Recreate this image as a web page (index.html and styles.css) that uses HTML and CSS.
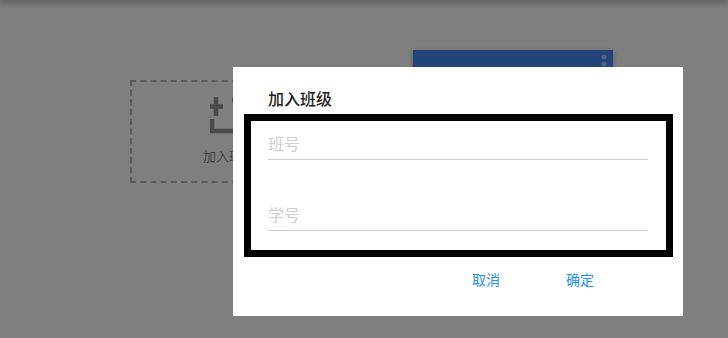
FILE: index.html
```html
<!DOCTYPE html>
<html lang="zh">
<head>
    <meta charset="UTF-8">
    <meta name="viewport" content="width=device-width, initial-scale=1.0">
    <title>加入班级</title>
    <link rel="stylesheet" href="styles.css">
</head>
<body>
    <div class="topbar"></div>

    <div class="main">
        <div class="join-card">
            <svg class="join-icon" width="40" height="38" viewBox="0 0 40 38">
                <path d="M6 1 V20 M-1 10.5 H13" stroke="#949494" stroke-width="4.5" fill="none"/>
                <path d="M2 23 V35 H38 V4 H22" stroke="#949494" stroke-width="4.5" fill="none"/>
            </svg>
            <div class="join-text">加入班级</div>
        </div>

        <div class="class-card">
            <svg class="more" width="6" height="20" viewBox="0 0 6 20">
                <circle cx="3" cy="3" r="2.5" fill="rgba(255,255,255,0.55)"/>
                <circle cx="3" cy="10" r="2.5" fill="rgba(255,255,255,0.55)"/>
                <circle cx="3" cy="17" r="2.5" fill="rgba(255,255,255,0.55)"/>
            </svg>
        </div>
    </div>

    <!-- dialog -->
    <div class="overlay"></div>
    <div class="dialog">
        <h2 class="dialog-title">加入班级</h2>
        <div class="form-box">
            <div class="field">
                <input type="text" placeholder="班号">
            </div>
            <div class="field second">
                <input type="text" placeholder="学号">
            </div>
        </div>
        <div class="actions">
            <button>取消</button>
            <button>确定</button>
        </div>
    </div>
</body>
</html>
```

FILE: styles.css
```css
body {
    margin: 0;
    background: #ffffff;
    font-family: 'Noto Sans CJK SC', 'Noto Sans', sans-serif;
    height: 338px;
    overflow: hidden;
}

.topbar {
    height: 0;
    box-shadow: 0 0 7px 2px rgba(0, 0, 0, 0.45);
}

.main {
    display: flex;
    align-items: flex-start;
    padding: 50px 0 0 130px;
    gap: 83px;
}

.join-card {
    box-sizing: border-box;
    width: 200px;
    height: 103px;
    margin-top: 30px;
    border: 2px dashed #b4b4b4;
    display: flex;
    flex-direction: column;
    align-items: center;
    padding-top: 14px;
}

.join-text {
    margin-top: 13px;
    margin-right: 2px;
    font-size: 13px;
    line-height: 18px;
    color: #888888;
}

.class-card {
    width: 200px;
    height: 150px;
    background: #4488f4;
    box-shadow: 0 2px 6px rgba(0, 0, 0, 0.3);
    display: flex;
    justify-content: flex-end;
    padding-top: 4px;
    box-sizing: border-box;
}

.more {
    margin-right: 6px;
}

.overlay {
    position: fixed;
    inset: 0;
    background: rgba(0, 0, 0, 0.5);
}

.dialog {
    position: fixed;
    left: 233px;
    top: 67px;
    width: 450px;
    height: 249px;
    box-sizing: border-box;
    background: #ffffff;
    padding: 19px 10px 0 11px;
}

.dialog-title {
    margin: 0 0 4px 24px;
    font-size: 16px;
    line-height: 24px;
    font-weight: 500;
    color: #222222;
}

.form-box {
    border: 7px solid #000000;
    padding: 9px 18px 19px 17px;
}

.field input {
    display: block;
    box-sizing: border-box;
    width: 100%;
    height: 30px;
    border: none;
    border-bottom: 1px solid #cccccc;
    padding: 0 0 3px;
    font-family: inherit;
    font-size: 16px;
    outline: none;
}

.field input::placeholder {
    color: #cfcfcf;
}

.field.second {
    margin-top: 41px;
}

.actions {
    display: flex;
    justify-content: flex-end;
    gap: 14px;
    padding: 4px 53px 0 0;
}

button {
    width: 80px;
    height: 36px;
    border: none;
    background: none;
    font-family: inherit;
    font-size: 14px;
    color: #1e90ff;
    cursor: pointer;
}
```
